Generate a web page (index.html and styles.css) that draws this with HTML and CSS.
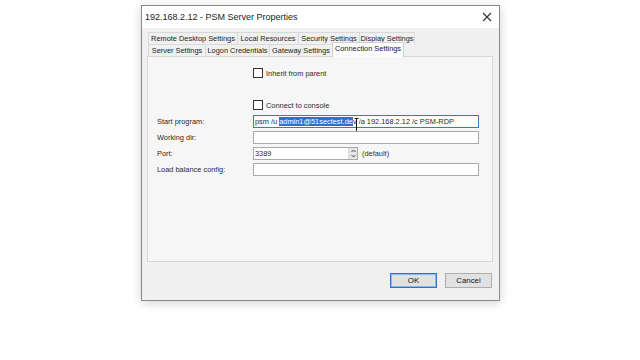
FILE: index.html
```html
<!DOCTYPE html>
<html>
<head>
<meta charset="utf-8">
<link rel="stylesheet" href="styles.css">
</head>
<body>
<div class="dialog">
  <div class="titlebar">
    <span class="title">192.168.2.12 - PSM Server Properties</span>
    <svg class="close" width="10" height="10" viewBox="0 0 10 10"><path d="M1 1L9 9M9 1L1 9" stroke="#333" stroke-width="1.1"/></svg>
  </div>
  <div class="content">
    <div class="tabs">
      <div class="tabrow">
        <div class="tab w-rds">Remote Desktop Settings</div>
        <div class="tab w-lr">Local Resources</div>
        <div class="tab w-ss">Security Settings</div>
        <div class="tab w-ds">Display Settings</div>
      </div>
      <div class="tabrow">
        <div class="tab w-sv">Server Settings</div>
        <div class="tab w-lc">Logon Credentials</div>
        <div class="tab w-gs">Gateway Settings</div>
        <div class="tab active w-cs">Connection Settings</div>
      </div>
    </div>
    <div class="panel">
      <div class="checkrow first"><span class="box"></span><span>Inherit from parent</span></div>
      <div class="checkrow second"><span class="box"></span><span>Connect to console</span></div>
      <div class="form">
        <div class="label">Start program:</div>
        <div class="field focus">psm /u <span class="sel">admin1@51sectest.de</span>v /a 192.168.2.12 /c PSM-RDP
          <svg class="ibeam" width="5" height="14" viewBox="0 0 5 14"><path d="M0.5 0.5H4.5M2.5 0.5V13.5M0.5 13.5H4.5" stroke="#111" stroke-width="1"/></svg>
        </div>
        <div class="label">Working dir:</div>
        <div class="field"></div>
        <div class="label">Port:</div>
        <div class="portline">
          <div class="field port">3389<span class="spin"><svg width="7" height="11" viewBox="0 0 7 11"><path d="M1.5 4L3.5 2L5.5 4M1.5 7L3.5 9L5.5 7" fill="none" stroke="#444" stroke-width="1"/></svg></span></div>
          <span class="def">(default)</span>
        </div>
        <div class="label">Load balance config:</div>
        <div class="field"></div>
      </div>
    </div>
    <div class="buttons">
      <div class="btn ok">OK</div>
      <div class="btn">Cancel</div>
    </div>
  </div>
</div>
</body>
</html>
```
FILE: styles.css
```css
html, body {
  margin: 0;
  padding: 0;
  background: #ffffff;
}
body {
  font-family: "Liberation Sans", Arial, sans-serif;
  color: #1a1a1a;
  width: 640px;
  height: 360px;
  overflow: hidden;
}
.dialog {
  margin: 5px 0 0 141px;
  width: 357px;
  height: 294px;
  border: 1px solid #8a8a8a;
  background: #f0f0f0;
  box-shadow: 0 2px 10px rgba(0,0,0,0.18);
  display: flex;
  flex-direction: column;
}
.titlebar {
  height: 22px;
  background: #ffffff;
  display: flex;
  align-items: center;
  justify-content: space-between;
  padding: 0 7px 0 3px;
}
.title {
  font-size: 9px;
  color: #222;
}
.close { display: block; }
.content {
  flex: 1;
  padding: 4px 6px 0 5px;
  display: flex;
  flex-direction: column;
}
.tabs {
  display: flex;
  flex-direction: column;
  padding-left: 1px;
}
.tabrow {
  display: flex;
  height: 12px;
}
.tab {
  font-size: 7.4px;
  line-height: 11px;
  border: 1px solid #d9d9d9;
  border-bottom: none;
  margin-right: -1px;
  background: #f0f0f0;
  color: #222;
  text-align: center;
  white-space: nowrap;
  box-sizing: border-box;
  height: 12px;
}
.tab.active {
  background: #fbfbfb;
  height: 15px;
  margin-top: -2px;
  line-height: 12px;
  position: relative;
  z-index: 2;
  border-color: #d0d0d0;
}
.w-rds { width: 90px; }
.w-lr { width: 62px; }
.w-ss { width: 62px; }
.w-ds { width: 56px; }
.w-sv { width: 58px; }
.w-lc { width: 65px; }
.w-gs { width: 64px; }
.w-cs { width: 72px; }
.panel {
  height: 206px;
  border: 1px solid #d6d6d6;
  background: #f6f6f6;
  box-sizing: border-box;
  padding: 11px 12px 0 9px;
  font-size: 7.4px;
  color: #2a2a2a;
}
.checkrow {
  display: flex;
  align-items: center;
  gap: 3px;
  margin-left: 96px;
  height: 10px;
}
.checkrow.second { margin-top: 22px; }
.box {
  width: 8px;
  height: 8px;
  border: 1px solid #333;
  background: #fff;
  box-sizing: content-box;
}
.form {
  margin-top: 5px;
  display: grid;
  grid-template-columns: 96px 226px;
  row-gap: 3px;
  align-items: center;
}
.label {
  height: 13px;
  line-height: 13px;
}
.field {
  height: 13px;
  line-height: 12px;
  border: 1px solid #a9a9a9;
  background: #fff;
  box-sizing: border-box;
  padding-left: 1px;
  white-space: nowrap;
  position: relative;
  overflow: visible;
}
.field.focus { border-color: #3a78c9; }
.sel {
  background: #2f6fd1;
  color: #fff;
}
.ibeam {
  position: absolute;
  left: 100px;
  top: 2px;
}
.portline {
  display: flex;
  align-items: center;
  gap: 4px;
}
.field.port {
  width: 105px;
  display: flex;
  justify-content: space-between;
  padding-right: 0;
}
.spin {
  width: 8px;
  height: 11px;
  background: #e6e6e6;
  border-left: 1px solid #ddd;
  display: flex;
  align-items: center;
  justify-content: center;
}
.def { color: #333; }
.buttons {
  display: flex;
  justify-content: flex-end;
  gap: 8px;
  margin-top: 11px;
  padding-right: 1px;
}
.btn {
  width: 47px;
  height: 15px;
  line-height: 13px;
  border: 1px solid #adadad;
  background: #e1e1e1;
  box-sizing: border-box;
  text-align: center;
  font-size: 7.8px;
  color: #111;
}
.btn.ok {
  border: 1px solid #2f72c9;
  box-shadow: inset 0 0 0 1px #8fb7e8;
}
```
